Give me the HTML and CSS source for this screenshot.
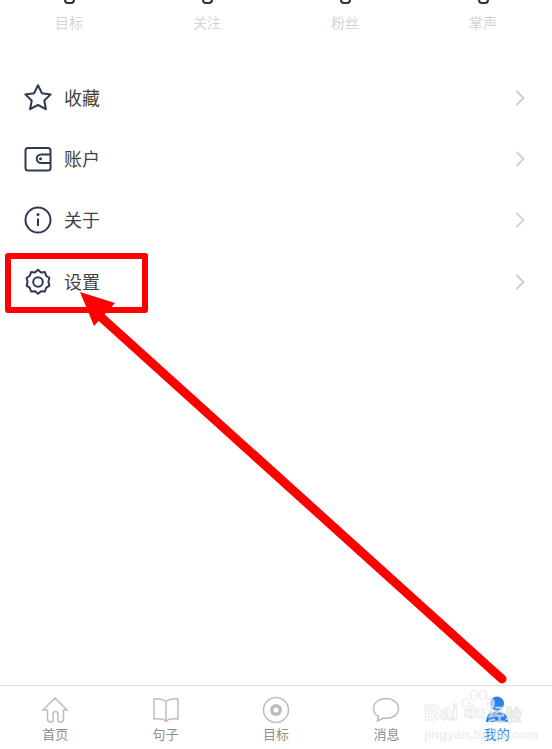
FILE: index.html
```html
<!DOCTYPE html>
<html lang="zh-CN">
<head>
    <meta charset="UTF-8">
    <meta name="viewport" content="width=device-width, initial-scale=1.0">
    <title>我的</title>
    <link rel="stylesheet" href="styles.css">
</head>
<body>
    <div class="page">
        <div class="stats">
            <div class="stat"><span class="stat-num"></span><p>目标</p></div>
            <div class="stat"><span class="stat-num"></span><p>关注</p></div>
            <div class="stat"><span class="stat-num"></span><p>粉丝</p></div>
            <div class="stat"><span class="stat-num"></span><p>掌声</p></div>
        </div>

        <div class="menu">
            <div class="row">
                <svg class="row-icon" viewBox="0 0 28 28"><path d="M14 1.200l3.900 8 8.800 1.200-6.400 6.100 1.600 8.700-7.900-4.200-7.900 4.200 1.600-8.700-6.400-6.100 8.800-1.200z"/></svg>
                <span class="row-text">收藏</span>
                <svg class="chev" viewBox="0 0 10 16"><path d="M1.5 1l7 7-7 7"/></svg>
            </div>
            <div class="row">
                <svg class="row-icon" viewBox="0 0 28 28"><rect x="1.5" y="3" width="25" height="22.5" rx="2.5"/><path d="M26.5 9.5h-9.5a4 4 0 0 0 0 8.500h9.500"/><circle class="dot" cx="16.500" cy="13.700" r="1.500"/></svg>
                <span class="row-text">账户</span>
                <svg class="chev" viewBox="0 0 10 16"><path d="M1.5 1l7 7-7 7"/></svg>
            </div>
            <div class="row">
                <svg class="row-icon" viewBox="0 0 28 28"><circle cx="14" cy="14" r="12.500"/><path d="M14 12.500v7.500"/><circle class="dot" cx="14" cy="8.500" r="1.500"/></svg>
                <span class="row-text">关于</span>
                <svg class="chev" viewBox="0 0 10 16"><path d="M1.500 1l7 7-7 7"/></svg>
            </div>
            <div class="row">
                <svg class="row-icon" viewBox="0 0 28 28"><path d="M14 1.800l3 2.600 3.900-.300 1.300 3.600 3.200 2.300-1 3.800 1 3.800-3.200 2.300-1.300 3.600-3.900-.300-3 2.600-3-2.600-3.900.300-1.300-3.600-3.200-2.300 1-3.800-1-3.800 3.200-2.300 1.300-3.600 3.900.300z" stroke-linejoin="round"/><circle cx="14" cy="14" r="4.800"/></svg>
                <span class="row-text">设置</span>
                <svg class="chev" viewBox="0 0 10 16"><path d="M1.500 1l7 7-7 7"/></svg>
            </div>
        </div>

        <nav class="tabbar">
            <div class="tab">
                <svg viewBox="0 0 28 28"><path d="M14 2L2 14h4.500v9a3 3 0 0 0 3 3h1.500a1 1 0 0 0 1-1v-7a2.500 2.500 0 0 1 5 0v7a1 1 0 0 0 1 1h1.500a3 3 0 0 0 3-3v-9H26z"/></svg>
                <span>首页</span>
            </div>
            <div class="tab">
                <svg viewBox="0 0 28 28"><path d="M14 5.500C12 3.500 6 2.500 2 3v20c4-.500 10 0 12 2.500 2-2.500 8-3 12-2.500V3c-4-.500-10 .500-12 2.500zM14 5.500v20"/></svg>
                <span>句子</span>
            </div>
            <div class="tab">
                <svg viewBox="0 0 28 28"><circle cx="14" cy="14" r="12.500"/><circle class="fill-grey" cx="14" cy="14" r="6"/><circle class="fill-white" cx="14" cy="14" r="2.500"/></svg>
                <span>目标</span>
            </div>
            <div class="tab">
                <svg viewBox="0 0 28 28"><path d="M14 2.500C7 2.500 1.500 6.500 1.500 12.500c0 3.500 2 6.300 5 8l-1 4.500 6-3c.800.200 1.700.300 2.500.300 7 0 12.500-4 12.500-9.800S21 2.500 14 2.500z"/></svg>
                <span>消息</span>
            </div>
            <div class="tab tab-active">
                <svg viewBox="0 0 28 28"><circle class="fill-blue" cx="14" cy="7.500" r="7"/><path class="fill-blue" d="M3 26c0-7 4-10.500 11-10.500S25 19 25 26z"/></svg>
                <span>我的</span>
            </div>
        </nav>

        <div class="highlight"></div>
        <svg class="arrow" viewBox="0 0 552 749">
            <path d="M502 679L102 318"/>
            <polygon points="80,292 115,303 94,326"/>
        </svg>
        <div class="watermark">
            <svg class="wm-paw" viewBox="0 0 34 20"><ellipse cx="5" cy="13" rx="3.500" ry="4.500"/><ellipse cx="13" cy="5" rx="3.500" ry="4.500"/><ellipse cx="22" cy="5" rx="3.500" ry="4.500"/><ellipse cx="30" cy="13" rx="3.500" ry="4.500"/></svg>
            <div class="wm-logo"><span>Bai</span><span class="wm-du">du</span><span class="wm-cn">经验</span></div>
            <div class="wm-url">jingyan.baidu.com</div>
        </div>
    </div>
</body>
</html>
```

FILE: styles.css
```css
* {
    box-sizing: border-box;
}

html, body {
    margin: 0;
    padding: 0;
}

body {
    font-family: "Noto Sans CJK SC", "Liberation Sans", sans-serif;
    background: #fff;
}

.page {
    position: relative;
    width: 552px;
    height: 749px;
    overflow: hidden;
    display: flex;
    flex-direction: column;
}

/* stats row, cut off by the top of the screen */
.stats {
    display: flex;
    height: 67px;
}

.stat {
    flex: 1;
    display: flex;
    flex-direction: column;
    align-items: center;
}

.stat-num {
    width: 11px;
    height: 4px;
    border: 2px solid #333;
    border-top: 0;
    border-radius: 0 0 6px 6px;
}

.stat p {
    margin: 8px 0 0;
    font-size: 14px;
    line-height: 20px;
    color: #d4d4d4;
}

.menu {
    flex: 1;
}

.row {
    display: flex;
    align-items: center;
    height: 61.3px;
    padding: 0 27px 0 24px;
}

.row-icon {
    width: 28px;
    height: 28px;
    fill: none;
    stroke: #2f3a52;
    stroke-width: 2;
    stroke-linejoin: round;
}

.row-icon .dot {
    fill: #2f3a52;
    stroke: none;
}

.row-text {
    margin: 0 0 2px 12px;
    font-size: 18px;
    color: #444;
    flex: 1;
}

.chev {
    width: 10px;
    height: 16px;
    fill: none;
    stroke: #cfcfcf;
    stroke-width: 1.800;
}

.tabbar {
    display: flex;
    height: 64px;
    border-top: 1px solid #dedede;
}

.tab {
    flex: 1;
    display: flex;
    flex-direction: column;
    align-items: center;
    padding-top: 10px;
    font-size: 13px;
    line-height: 18px;
    color: #8e8e8e;
}

.tab svg {
    width: 28px;
    height: 28px;
    fill: none;
    stroke: #bdbdbd;
    stroke-width: 1.500;
    margin-bottom: 1px;
}

.tab .fill-grey {
    fill: #bdbdbd;
    stroke: none;
}

.tab .fill-white {
    fill: #fff;
    stroke: none;
}

.tab .fill-blue {
    fill: #2a82f0;
    stroke: none;
}

.tab-active {
    color: #2a82f0;
}

/* annotations drawn on top of the screenshot */
.highlight {
    position: absolute;
    left: 5px;
    top: 253px;
    width: 143px;
    height: 60px;
    border: 6px solid #ff0000;
    border-radius: 3px;
}

.arrow {
    position: absolute;
    left: 0;
    top: 0;
    width: 552px;
    height: 749px;
}

.arrow path {
    fill: none;
    stroke: #ff0000;
    stroke-width: 9;
    stroke-linecap: round;
}

.arrow polygon {
    fill: #ff0000;
}

.watermark {
    position: absolute;
    left: 424px;
    top: 690px;
    width: 100px;
    font-family: "Liberation Sans", sans-serif;
}

.wm-paw {
    position: absolute;
    left: 37px;
    top: 0;
    width: 34px;
    height: 20px;
    fill: rgba(255, 255, 255, 0.6);
    stroke: rgba(215, 215, 215, 0.6);
    stroke-width: 1;
}

.wm-logo {
    display: flex;
    align-items: center;
    height: 24px;
    margin-top: 11px;
    font-size: 22px;
    font-weight: bold;
    white-space: nowrap;
    color: rgba(255, 255, 255, 0.65);
    -webkit-text-stroke: 1px rgba(215, 215, 215, 0.6);
}

.wm-du {
    margin-left: 6px;
    font-size: 17px;
}

.wm-cn {
    margin-left: 3px;
    font-size: 17px;
    font-family: "Noto Sans CJK SC", sans-serif;
    font-weight: normal;
}

.wm-url {
    margin-top: 2px;
    font-size: 13px;
    line-height: 15px;
    white-space: nowrap;
    color: rgba(225, 225, 225, 0.55);
    font-weight: bold;
}
```
